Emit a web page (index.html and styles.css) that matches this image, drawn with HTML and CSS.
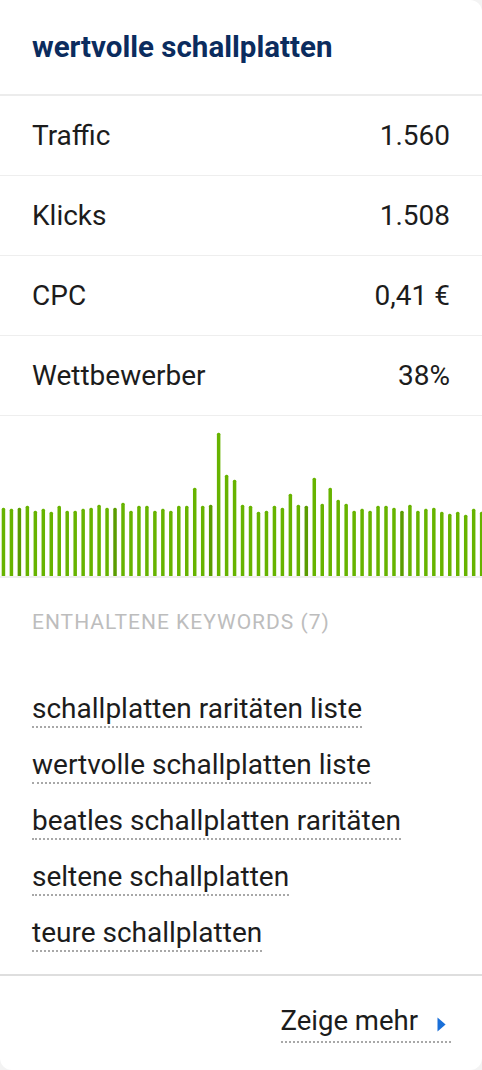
FILE: index.html
```html
<!DOCTYPE html>
<html lang="de">
<head>
<meta charset="utf-8">
<title>wertvolle schallplatten</title>
<link rel="stylesheet" href="styles.css">
</head>
<body>
<div class="card">
  <div class="head"><h1 class="title">wertvolle schallplatten</h1></div>
  <div class="row"><span>Traffic</span><span>1.560</span></div>
  <div class="row"><span>Klicks</span><span>1.508</span></div>
  <div class="row"><span>CPC</span><span>0,41 €</span></div>
  <div class="row"><span>Wettbewerber</span><span>38%</span></div>
  <div class="chart">
    <svg class="bars" width="482" height="160" viewBox="0 0 482 160">
      <g transform="translate(0,160) scale(1,-1)">
        <rect x="1.7" y="-2" width="3.5" height="70.3" rx="1.5"/>
        <rect x="9.67" y="-2" width="3.5" height="69.3" rx="1.5"/>
        <rect class="dk" x="17.64" y="-2" width="3.5" height="70.3" rx="1.5"/>
        <rect x="25.61" y="-2" width="3.5" height="72.3" rx="1.5"/>
        <rect x="33.58" y="-2" width="3.5" height="67.3" rx="1.5"/>
        <rect x="41.55" y="-2" width="3.5" height="69.3" rx="1.5"/>
        <rect x="49.52" y="-2" width="3.5" height="66.3" rx="1.5"/>
        <rect x="57.49" y="-2" width="3.5" height="72.3" rx="1.5"/>
        <rect x="65.46" y="-2" width="3.5" height="67.3" rx="1.5"/>
        <rect x="73.43" y="-2" width="3.5" height="67.3" rx="1.5"/>
        <rect x="81.4" y="-2" width="3.5" height="69.3" rx="1.5"/>
        <rect x="89.37" y="-2" width="3.5" height="70.3" rx="1.5"/>
        <rect x="97.34" y="-2" width="3.5" height="73.3" rx="1.5"/>
        <rect x="105.31" y="-2" width="3.5" height="70.3" rx="1.5"/>
        <rect class="dk" x="113.28" y="-2" width="3.5" height="70.3" rx="1.5"/>
        <rect x="121.25" y="-2" width="3.5" height="75.3" rx="1.5"/>
        <rect x="129.22" y="-2" width="3.5" height="67.3" rx="1.5"/>
        <rect x="137.19" y="-2" width="3.5" height="72.3" rx="1.5"/>
        <rect x="145.16" y="-2" width="3.5" height="72.3" rx="1.5"/>
        <rect x="153.13" y="-2" width="3.5" height="67.3" rx="1.5"/>
        <rect x="161.1" y="-2" width="3.5" height="69.3" rx="1.5"/>
        <rect x="169.07" y="-2" width="3.5" height="67.3" rx="1.5"/>
        <rect x="177.04" y="-2" width="3.5" height="72.3" rx="1.5"/>
        <rect x="185.01" y="-2" width="3.5" height="72.3" rx="1.5"/>
        <rect x="192.98" y="-2" width="3.5" height="90.3" rx="1.5"/>
        <rect x="200.95" y="-2" width="3.5" height="72.3" rx="1.5"/>
        <rect class="dk" x="208.92" y="-2" width="3.5" height="73.3" rx="1.5"/>
        <rect x="216.89" y="-2" width="3.5" height="145.3" rx="1.5"/>
        <rect x="224.86" y="-2" width="3.5" height="103.3" rx="1.5"/>
        <rect x="232.83" y="-2" width="3.5" height="98.3" rx="1.5"/>
        <rect x="240.8" y="-2" width="3.5" height="73.3" rx="1.5"/>
        <rect x="248.77" y="-2" width="3.5" height="72.3" rx="1.5"/>
        <rect x="256.74" y="-2" width="3.5" height="66.3" rx="1.5"/>
        <rect x="264.71" y="-2" width="3.5" height="67.3" rx="1.5"/>
        <rect x="272.68" y="-2" width="3.5" height="72.3" rx="1.5"/>
        <rect x="280.65" y="-2" width="3.5" height="70.3" rx="1.5"/>
        <rect x="288.62" y="-2" width="3.5" height="84.3" rx="1.5"/>
        <rect x="296.59" y="-2" width="3.5" height="73.3" rx="1.5"/>
        <rect class="dk" x="304.56" y="-2" width="3.5" height="72.3" rx="1.5"/>
        <rect x="312.53" y="-2" width="3.5" height="100.3" rx="1.5"/>
        <rect x="320.5" y="-2" width="3.5" height="74.3" rx="1.5"/>
        <rect x="328.47" y="-2" width="3.5" height="90.3" rx="1.5"/>
        <rect x="336.44" y="-2" width="3.5" height="78.3" rx="1.5"/>
        <rect x="344.41" y="-2" width="3.5" height="74.3" rx="1.5"/>
        <rect x="352.38" y="-2" width="3.5" height="67.3" rx="1.5"/>
        <rect x="360.35" y="-2" width="3.5" height="69.3" rx="1.5"/>
        <rect x="368.32" y="-2" width="3.5" height="67.3" rx="1.5"/>
        <rect x="376.29" y="-2" width="3.5" height="72.3" rx="1.5"/>
        <rect x="384.26" y="-2" width="3.5" height="72.3" rx="1.5"/>
        <rect x="392.23" y="-2" width="3.5" height="70.3" rx="1.5"/>
        <rect class="dk" x="400.2" y="-2" width="3.5" height="67.3" rx="1.5"/>
        <rect x="408.17" y="-2" width="3.5" height="73.3" rx="1.5"/>
        <rect x="416.14" y="-2" width="3.5" height="67.3" rx="1.5"/>
        <rect x="424.11" y="-2" width="3.5" height="69.3" rx="1.5"/>
        <rect x="432.08" y="-2" width="3.5" height="70.3" rx="1.5"/>
        <rect x="440.05" y="-2" width="3.5" height="66.3" rx="1.5"/>
        <rect x="448.02" y="-2" width="3.5" height="64.3" rx="1.5"/>
        <rect x="455.99" y="-2" width="3.5" height="66.3" rx="1.5"/>
        <rect x="463.96" y="-2" width="3.5" height="63.3" rx="1.5"/>
        <rect x="471.93" y="-2" width="3.5" height="69.3" rx="1.5"/>
        <rect x="479.9" y="-2" width="3.5" height="66.3" rx="1.5"/>
      </g>
    </svg>
  </div>
  <div class="keywords">
    <div class="kw-title">Enthaltene Keywords (7)</div>
    <ul class="kw-list">
      <li><span class="kw">schallplatten raritäten liste</span></li>
      <li><span class="kw">wertvolle schallplatten liste</span></li>
      <li><span class="kw">beatles schallplatten raritäten</span></li>
      <li><span class="kw">seltene schallplatten</span></li>
      <li><span class="kw">teure schallplatten</span></li>
    </ul>
  </div>
  <div class="foot">
    <span class="more">Zeige mehr<svg class="arrow" width="9" height="15" viewBox="0 0 9 15"><path d="M0.5 0.5 L8.6 7.5 L0.5 14.5 Z"/></svg></span>
  </div>
</div>
</body>
</html>
```

FILE: styles.css
```css
html, body {
  margin: 0;
  padding: 0;
}
body {
  background: #f3f3f3;
  font-family: Roboto, "Liberation Sans", sans-serif;
  color: #1c1c1c;
}
.card {
  width: 482px;
  height: 1070px;
  background: #fff;
  border-radius: 0 12px 12px 12px;
  overflow: hidden;
  display: flex;
  flex-direction: column;
}
.head {
  height: 94px;
  padding: 0 32px;
  display: flex;
  align-items: center;
  border-bottom: 2px solid #ececec;
}
.title {
  margin: 0;
  font-size: 29.5px;
  font-weight: 700;
  color: #0b2c5e;
  line-height: 34px;
}
.row {
  height: 80px;
  box-sizing: border-box;
  padding: 0 32px;
  display: flex;
  align-items: center;
  justify-content: space-between;
  border-bottom: 1px solid #eeeeee;
  font-size: 28px;
  line-height: 34px;
}
.chart {
  height: 160px;
  border-bottom: 2px solid #eeeeee;
}
.bars {
  display: block;
}
.bars rect {
  fill: #67b300;
}
.bars rect.dk {
  fill: #5a9c00;
}
.keywords {
  padding: 32px 32px 22px;
  border-bottom: 2px solid #dedede;
}
.kw-title {
  font-size: 21px;
  line-height: 24px;
  letter-spacing: 1px;
  color: #bdbdbd;
  text-transform: uppercase;
}
.kw-list {
  list-style: none;
  margin: 58px 0 0;
  padding: 0;
  display: flex;
  flex-direction: column;
  gap: 20px;
}
.kw {
  display: inline-block;
  font-size: 28px;
  line-height: 34px;
  border-bottom: 2px dotted #a8a8a8;
}
.foot {
  padding: 25px 31px 0 32px;
  display: flex;
  justify-content: flex-end;
}
.more {
  display: inline-flex;
  align-items: center;
  font-size: 27.5px;
  line-height: 40px;
  border-bottom: 2px dotted #a8a8a8;
}
.arrow {
  margin: 6px 5px 0 19px;
  fill: #1a6fd8;
}
```
